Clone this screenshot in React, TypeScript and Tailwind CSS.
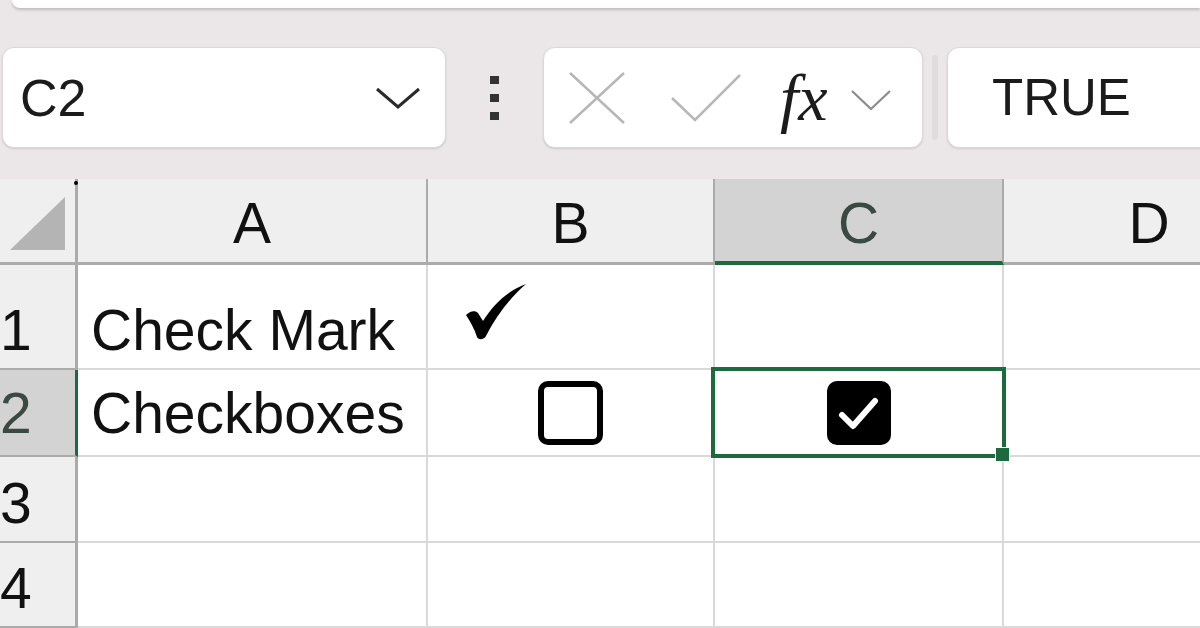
import React from 'react';

const cellFont = { fontFamily: '"Liberation Sans", Arial, sans-serif' };

// heavy ✔ used as plain cell content
const HeavyCheck: React.FC = () => (
  <svg width="60" height="56" viewBox="0 0 60 56">
    <path
      d="M0,31 C4,27 9,26 12,29 L17,37 C27,21 41,7 60,0 C46,12 31,30 20,52 C18,56 12,56 11,53 C8,44 4,37 0,31 Z"
      fill="#000"
    />
  </svg>
);

const CheckBox: React.FC<{ checked?: boolean }> = ({ checked }) =>
  checked ? (
    <div className="flex h-[64px] w-[64px] items-center justify-center rounded-[10px] bg-black">
      <svg width="64" height="64" viewBox="0 0 64 64">
        <path d="M15,34 L26,45 L48,20" fill="none" stroke="#fff" strokeWidth="6" strokeLinecap="round" strokeLinejoin="round" />
      </svg>
    </div>
  ) : (
    <div className="h-[64px] w-[65px] rounded-[10px] border-[6px] border-black bg-white" />
  );

const FormulaBar: React.FC = () => (
  <div className="mt-[39px] flex h-[101px] shrink-0 items-stretch">
    {/* name box */}
    <div className="ml-[2px] flex w-[444px] items-center justify-between rounded-[12px] border border-[#dcd8da] bg-white pl-[17px] pr-[24px] shadow-[0_1px_2px_rgba(0,0,0,0.12)]">
      <span className="text-[52px] leading-none text-[#1b1b1b]" style={cellFont}>C2</span>
      <svg width="46" height="24" viewBox="0 0 46 24">
        <path d="M2,3 L23,21 L44,3" fill="none" stroke="#2b2b2b" strokeWidth="3" />
      </svg>
    </div>

    {/* grip */}
    <div className="flex w-[97px] flex-col items-center justify-center gap-[10px]">
      <span className="h-[8px] w-[9px] bg-[#333]" />
      <span className="h-[8px] w-[9px] bg-[#333]" />
      <span className="h-[8px] w-[9px] bg-[#333]" />
    </div>

    {/* cancel / enter / fx */}
    <div className="flex w-[380px] items-center rounded-[12px] border border-[#dcd8da] bg-white shadow-[0_1px_2px_rgba(0,0,0,0.12)]">
      <svg className="ml-[23px]" width="60" height="54" viewBox="0 0 60 54">
        <path d="M3,2 L57,52 M57,2 L3,52" fill="none" stroke="#b7b7b7" strokeWidth="2.5" />
      </svg>
      <svg className="ml-[37px]" width="78" height="50" viewBox="0 0 78 50">
        <path d="M8,25 L31,47 L76,2" fill="none" stroke="#b7b7b7" strokeWidth="2.5" />
      </svg>
      <span
        className="ml-[38px] text-[66px] italic leading-none text-[#1c1c1c]"
        style={{ fontFamily: '"Liberation Serif", "Times New Roman", serif' }}
      >
        fx
      </span>
      <svg className="ml-[22px] mt-[4px]" width="42" height="24" viewBox="0 0 42 24">
        <path d="M2,3 L21,21 L40,3" fill="none" stroke="#8c8c8c" strokeWidth="2.2" />
      </svg>
    </div>

    {/* splitter */}
    <div className="flex w-[24px] justify-center py-[8px]">
      <div className="w-[6px] rounded-full bg-[#e0dcde]" />
    </div>

    {/* formula content */}
    <div className="-mr-[20px] flex flex-1 items-center rounded-[12px] border border-[#dcd8da] bg-white pl-[44px] shadow-[0_1px_2px_rgba(0,0,0,0.12)]">
      <span className="text-[51px] leading-none text-[#1b1b1b]" style={cellFont}>TRUE</span>
    </div>
  </div>
);

const colHead = 'flex items-end justify-center border-b-[3px] border-r-2 border-[#ababab] bg-[#efefef] pb-[10px] text-[57px] leading-none text-[#111]';
const rowHead = 'flex items-end border-b-2 border-r-[3px] border-[#ababab] bg-[#efefef] text-[57px] leading-none text-[#111]';
const cell = 'flex border-b-2 border-r-2 border-[#d9d9d9] bg-white';

const Sheet: React.FC = () => (
  <div
    className="mt-[31px] grid w-[1296px] shrink-0 grid-cols-[78px_350px_287px_289px_292px] grid-rows-[86px_105px_87px_86px_85px] bg-white"
    style={cellFont}
  >
    {/* header row */}
    <div className="relative flex items-end justify-end border-b-[3px] border-r-[3px] border-[#ababab] bg-[#efefef] pb-[12px] pr-[10px]">
      <svg width="55" height="53" viewBox="0 0 55 53">
        <path d="M55,0 L55,53 L0,53 Z" fill="#b4b4b4" />
      </svg>
      <span className="absolute -right-[3px] top-[2px] h-[4px] w-[4px] rounded-full bg-black" />
    </div>
    <div className={colHead}>A</div>
    <div className={colHead}>B</div>
    <div className="flex items-end justify-center border-b-[4px] border-r-2 border-b-[#1d6a3e] border-r-[#ababab] bg-[#d3d3d3] pb-[9px] text-[57px] leading-none text-[#3a4a42]">
      C
    </div>
    <div className={colHead}>D</div>

    {/* row 1 */}
    <div className={`${rowHead} pb-[9px]`}>1</div>
    <div className={`${cell} items-end pb-[9px] pl-[13px] text-[57px] leading-none text-[#111]`}>Check Mark</div>
    <div className={`${cell} items-start pl-[38px] pt-[19px]`}>
      <HeavyCheck />
    </div>
    <div className={cell} />
    <div className={cell} />

    {/* row 2 */}
    <div className="flex items-end border-b-2 border-r-[3px] border-b-[#ababab] border-r-[#1d6a3e] bg-[#d3d3d3] pb-[13px] text-[57px] leading-none text-[#3a4a42]">
      2
    </div>
    <div className={`${cell} items-end pb-[13px] pl-[13px] text-[57px] leading-none text-[#111]`}>Checkboxes</div>
    <div className={`${cell} items-center justify-center`}>
      <CheckBox />
    </div>
    <div className={`${cell} relative items-center justify-center`}>
      <CheckBox checked />
      <div className="absolute -bottom-[3px] -left-[4px] -right-[4px] -top-[3px] border-[4px] border-[#1d6a3e]" />
      <div className="absolute -bottom-[7px] -right-[8px] h-[15px] w-[15px] border border-white bg-[#1d6a3e]" />
    </div>
    <div className={cell} />

    {/* row 3 */}
    <div className={`${rowHead} pb-[9px]`}>3</div>
    <div className={cell} />
    <div className={cell} />
    <div className={cell} />
    <div className={cell} />

    {/* row 4 */}
    <div className={`${rowHead} pb-[9px]`}>4</div>
    <div className={cell} />
    <div className={cell} />
    <div className={cell} />
    <div className={cell} />
  </div>
);

const App: React.FC = () => (
  <div className="flex h-[628px] w-[1200px] flex-col overflow-hidden bg-[#ebe6e8]">
    <div className="ml-[12px] h-[8px] shrink-0 rounded-bl-[10px] bg-white shadow-[0_2px_3px_rgba(0,0,0,0.18)]" />
    <FormulaBar />
    <Sheet />
  </div>
);

export default App;
